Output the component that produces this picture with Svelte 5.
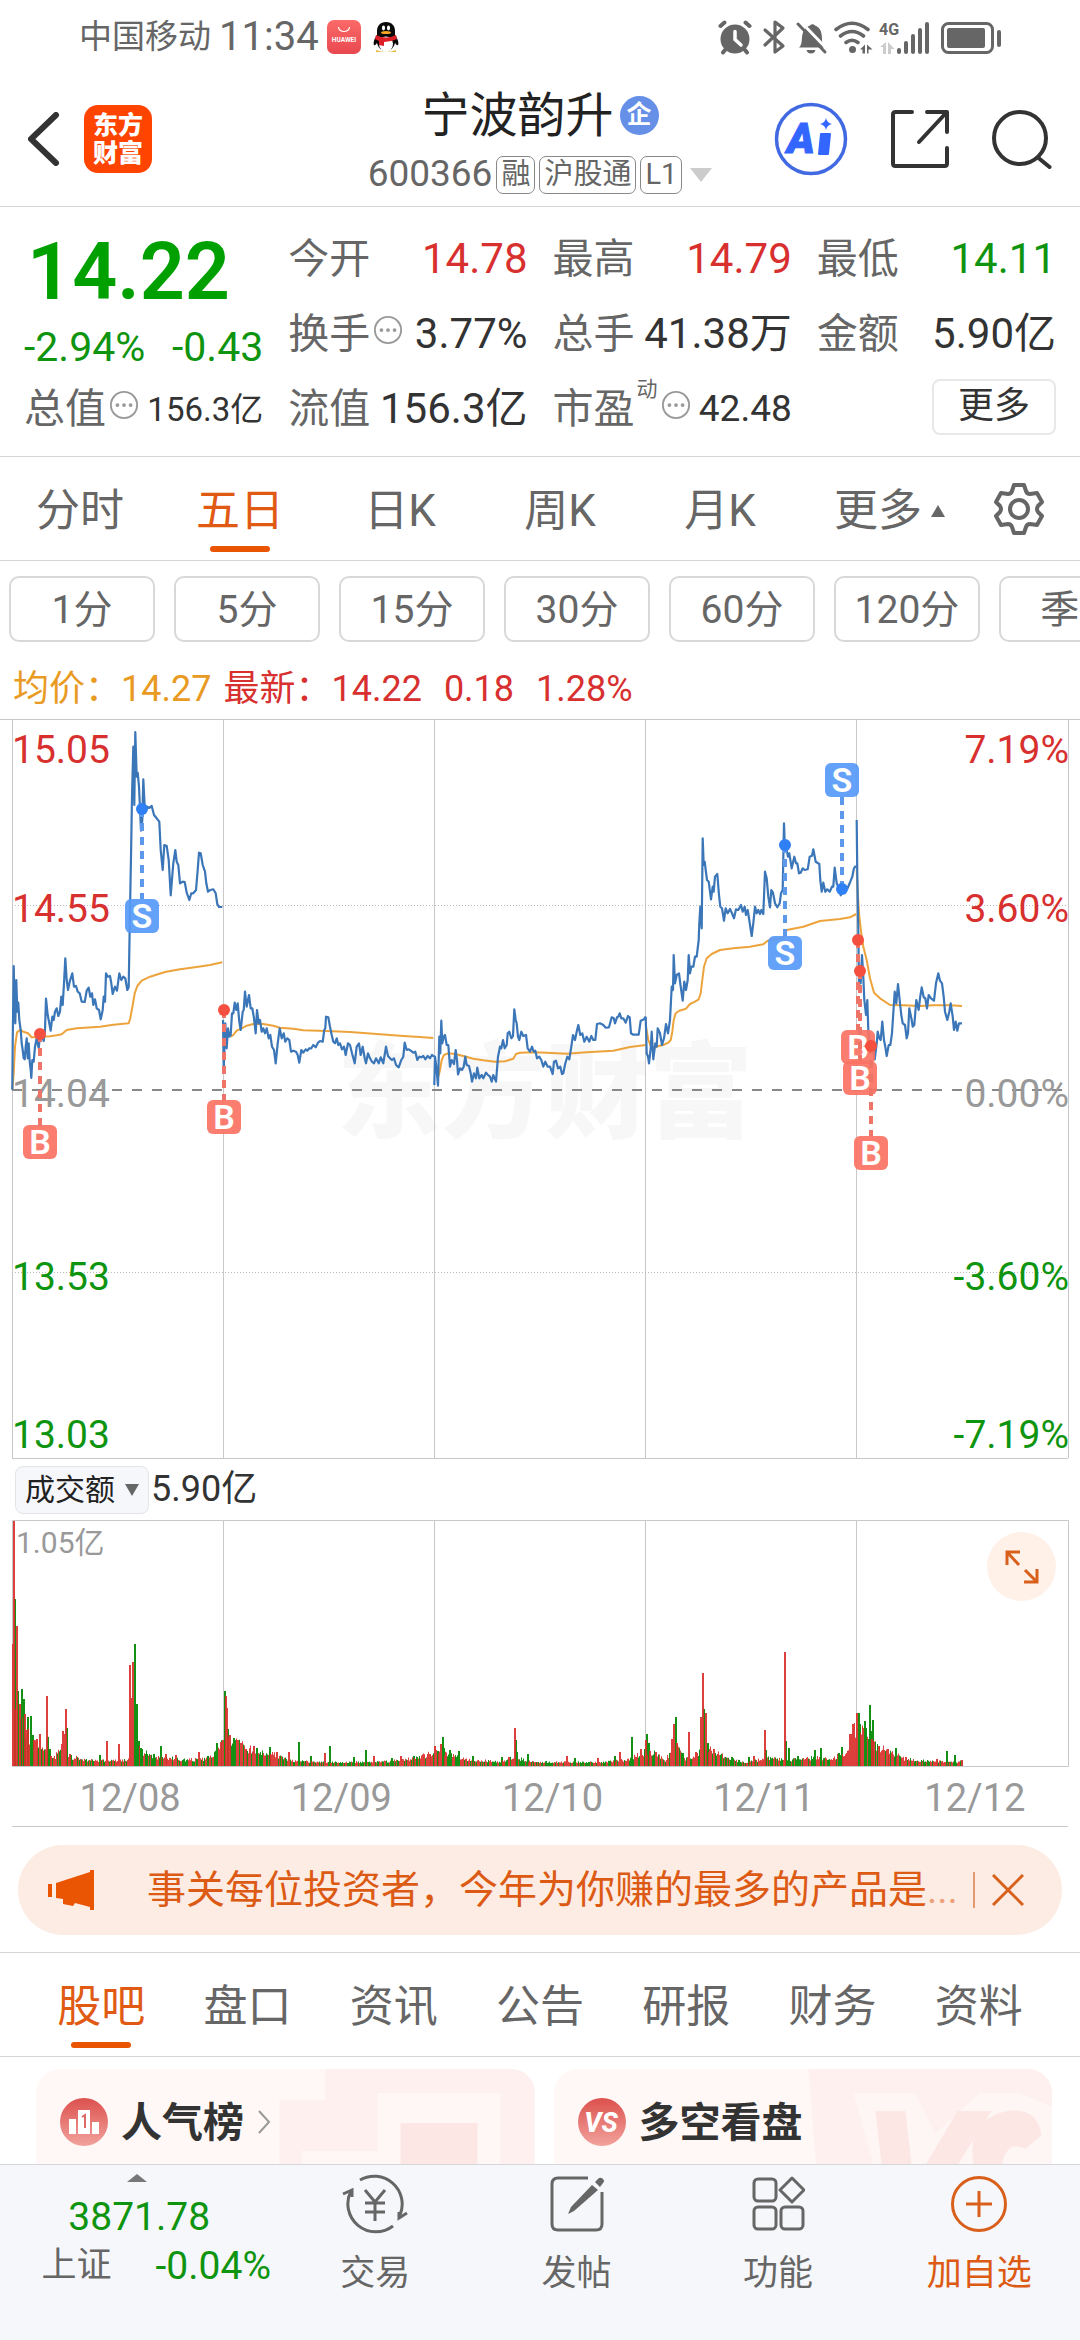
<script>
  const stats = [
    { label: '今开', value: '14.78', tone: 'up' },
    { label: '最高', value: '14.79', tone: 'up' },
    { label: '最低', value: '14.11', tone: 'down' },
    { label: '换手', value: '3.77%', info: true },
    { label: '总手', value: '41.38万' },
    { label: '金额', value: '5.90亿' },
    { label: '流值', value: '156.3亿' },
    { label: '市盈', value: '42.48', info: true, sup: '动', small: true }
  ];
  const ranges = ['分时', '五日', '日K', '周K', '月K'];
  const periods = ['1分', '5分', '15分', '30分', '60分', '120分', '季K'];
  const dates = ['12/08', '12/09', '12/10', '12/11', '12/12'];
  const sections = ['股吧', '盘口', '资讯', '公告', '研报', '财务', '资料'];

  let range = $state('五日');
  let section = $state('股吧');
  let bannerOpen = $state(true);

  // Sample lists hold "x,y" pairs at three units per chart pixel.
  function trace(samples, dx, dy) {
    return 'M' + samples.trim().split(/\s+/).map((pair) => {
      const [x, y] = pair.split(',').map(Number);
      return (x / 3 + dx).toFixed(1) + ' ' + (y / 3 + dy).toFixed(1);
    }).join('L');
  }

  const price = [
    trace('37,1139 38,1000 41,768 44,900 46,940 49,810 52,905 55,878 58,930 62,960 65,1000 68,1020 71,1045 74,1048 77,1010 80,985 83,1045 86,1000 89,1055 92,1080 94,1104 97,1050 101,1055 105,1010 110,985 116,1015 120,975 126,978 131,993 135,960 138,866 143,915 147,935 152,962 157,920 161,930 165,905 170,895 175,918 180,905 184,860 188,885 192,820 196,745 200,810 204,840 209,815 217,790 222,830 228,828 233,845 239,850 245,875 254,876 260,842 266,833 271,860 276,850 280,885 285,868 290,895 297,900 302,928 308,900 311,860 315,875 318,790 323,800 330,798 334,820 338,852 345,830 351,842 358,790 364,810 370,800 376,805 382,840 386,832 390,600 393,440 396,260 400,110 403,285 406,66 410,200 413,188 417,230 423,362 427,330 430,208 434,290 441,290 447,294 455,288 462,315 470,325 478,335 482,420 488,480 493,405 500,408 506,450 512,556 520,460 526,420 530,455 535,465 540,520 548,515 554,516 560,548 568,570 574,550 580,550 588,540 593,480 597,428 602,430 608,465 615,485 619,520 624,545 631,540 640,538 647,550 652,582 657,591 667,591', 0, -9),
    trace('669,930 671,1080 676,940 680,1015 684,955 688,980 692,975 696,910 700,910 704,878 709,900 713,880 718,935 722,960 728,905 731,900 735,845 740,890 747,855 752,895 757,895 762,925 767,970 771,900 776,940 780,930 785,965 790,955 795,970 800,955 806,985 811,975 816,1010 822,1020 827,1060 833,1000 839,955 845,985 851,970 856,995 862,985 868,990 873,1025 880,1022 888,1025 893,1035 898,1058 904,1020 910,1028 917,1018 922,1022 928,1015 934,1015 940,1005 947,1012 954,998 960,993 968,995 973,960 976,955 978,920 985,922 990,950 995,975 1000,995 1005,1000 1010,985 1015,1005 1020,1000 1026,1018 1032,1010 1037,1035 1044,1000 1050,1005 1056,1030 1064,1060 1070,1010 1077,1000 1082,1035 1088,1010 1094,1045 1098,1060 1104,1030 1110,1045 1116,1055 1122,1060 1128,1045 1136,1060 1142,1042 1150,1060 1158,1010 1164,1038 1170,1045 1176,1050 1182,1045 1188,1065 1196,1072 1204,1050 1210,1040 1214,998 1220,1020 1226,1018 1232,1022 1240,1028 1246,1025 1252,1050 1258,1040 1264,1042 1270,1038 1276,1048 1283,1038 1290,1045 1296,1035 1302,1040', 0, -9),
    trace('103,555 105,470 109,500 114,557 118,410 121,460 124,362 127,430 131,410 135,405 140,435 145,435 150,500 155,480 162,492 167,450 171,480 174,523 180,505 186,510 191,500 196,470 200,495 207,498 212,520 216,545 222,520 228,535 232,503 238,535 245,525 250,535 258,518 264,525 270,530 275,545 280,525 288,545 294,470 300,440 304,445 309,420 314,445 320,435 323,400 328,395 334,415 339,408 343,328 347,360 350,370 354,410 358,420 364,395 370,408 378,405 383,445 390,455 396,440 401,455 406,452 411,475 418,470 424,480 430,500 436,485 443,500 450,500 458,522 462,485 468,482 474,505 481,500 486,522 490,520 496,490 502,470 508,478 514,440 519,405 525,420 530,395 535,375 541,405 547,400 553,425 560,410 568,425 574,408 580,420 586,420 591,372 600,370 610,375 617,383 627,382 635,352 641,355 645,370 651,352 655,350 659,340 664,355 670,355 677,368 684,348 689,352 693,400 700,404 716,404 722,362 732,358 737,350', 400, 181),
    trace('17,920 20,1030 24,1040 27,1060 32,1015 35,965 40,1048 46,1000 50,1010 53,955 60,970 66,1005 72,985 78,942 84,970 90,930 95,830 99,840 101,735 105,820 110,795 117,790 122,830 128,872 133,815 138,840 143,810 146,735 150,790 154,770 160,770 165,740 170,740 176,690 178,640 181,590 185,655 188,385 191,465 194,455 197,480 201,510 206,515 213,568 218,530 221,545 225,500 232,492 237,555 241,590 246,595 252,632 257,595 263,610 270,597 277,612 282,625 288,598 295,600 303,585 308,605 314,590 318,615 323,600 327,625 335,678 340,640 345,590 350,610 355,600 360,612 364,600 370,612 375,485 380,505 385,560 390,592 394,540 399,548 405,580 412,592 419,580 423,550 428,540 432,340 434,400 440,420 444,440 448,430 455,475 463,440 468,460 472,460 477,490 482,488 488,475 494,480 503,478 509,440 516,437 520,418 527,455 538,462 541,510 545,545 550,518 556,545 562,538 569,545 576,530 580,530 584,473 590,520 597,535 602,556 610,540 622,536 631,515 637,500 641,478 645,470 649,470', 640, -9),
    trace('650,330 652,500 655,660 657,820 662,820 666,735 670,800 673,870 678,915 682,870 685,960 690,1020 695,1000 704,1048 710,1000 713,965 718,985 722,990 727,935 732,990 736,1010 740,1038 746,1005 751,1005 756,970 760,910 764,845 769,880 774,822 780,880 784,915 788,940 795,945 800,985 804,970 808,895 815,930 818,950 823,945 829,870 836,900 840,865 845,832 851,862 856,865 861,895 866,855 873,865 882,872 888,820 895,790 900,812 906,820 911,860 915,905 922,930 928,905 932,880 938,920 942,960 947,935 952,962 957,940 966,940', 640, -9)
  ];
  const average = [
    trace('37,1139 41,1090 45,1010 51,967 60,960 70,965 84,970 95,982 110,982 130,980 150,979 170,976 185,973 200,960 230,955 300,950 340,944 386,940 391,925 398,885 404,850 412,828 425,812 450,800 495,786 540,778 590,771 630,765 667,757', 0, -9),
    trace('692,980 700,975 710,962 725,955 740,947 760,942 790,942 820,947 840,953 880,956 910,961 980,963 1050,966 1130,972 1210,978 1260,981 1300,984', 0, -9),
    trace('115,530 120,510 125,480 132,465 145,460 165,462 190,468 220,476 250,481 285,485 315,484 340,476 348,462 360,458 400,457 440,458 500,461 560,457 640,452 690,441 737,435', 400, 181),
    trace('17,945 25,990 33,1010 42,1013 55,1008 70,1005 85,998 92,990 97,965 101,930 107,910 118,902 138,896 150,882 165,875 176,868 182,850 187,810 192,770 200,745 215,732 240,720 280,715 330,710 370,703 382,693 400,688 428,685 440,660 490,650 540,633 600,627 630,622 649,612', 640, -9),
    trace('650,480 654,560 658,620 664,670 670,710 680,750 690,805 702,848 720,865 750,885 790,886 840,888 880,886 930,886 966,888', 640, -9)
  ];

  const trades = [
    { side: 'B', x: 40, dot: 315, tag: 423 },
    { side: 'S', x: 142, dot: 90, tag: 197 },
    { side: 'B', x: 224, dot: 291, tag: 398 },
    { side: 'S', x: 785, dot: 126, tag: 234 },
    { side: 'S', x: 842, dot: 170, tag: 61 },
    { side: 'B', x: 858, dot: 221, tag: 328 },
    { side: 'B', x: 860, dot: 252, tag: 359 },
    { side: 'B', x: 871, dot: 327, tag: 434 }
  ];

  const gridX = [223.5, 434.5, 645.5, 856.5];
  const scale = [
    { y: 44, left: '15.05', right: '7.19%', tone: 'up' },
    { y: 203, left: '14.55', right: '3.60%', tone: 'up' },
    { y: 388, left: '14.04', right: '0.00%', tone: 'flat' },
    { y: 571, left: '13.53', right: '-3.60%', tone: 'down' },
    { y: 729, left: '13.03', right: '-7.19%', tone: 'down' }
  ];

  // Turnover: a base level for ordinary minutes plus the minutes that stand out.
  const level = [[12, 70], [20, 60], [30, 30], [40, 18], [55, 11], [62, 22], [70, 11], [85, 7], [110, 6], [128, 7], [134, 50], [140, 18], [155, 10], [170, 9], [185, 7], [205, 8], [215, 14], [223, 27], [228, 32], [240, 24], [255, 17], [275, 13], [290, 6], [330, 4], [380, 5], [410, 8], [435, 15], [445, 15], [470, 7], [500, 5], [515, 10], [530, 5], [600, 4], [630, 8], [641, 15], [650, 17], [665, 7], [676, 24], [685, 8], [698, 14], [705, 26], [715, 15], [730, 8], [745, 4], [765, 9], [800, 7], [815, 10], [830, 7], [845, 16], [856, 46], [872, 27], [890, 15], [905, 8], [940, 5], [963, 5]];
  const spikes = '12,122r 13,245r 14,167g 16,140r 17,75g 19,62r 21,77g 23,67g 24,52r 26,36r 27,49g 30,50g 32,31g 33,26r 36,27r 39,32r 41,17g 46,70r 47,29g 49,17g 62,35r 64,32r 65,57r 66,38g 69,12r 99,11g 106,25r 118,22r 129,101r 131,68r 132,104r 134,122g 135,40g 136,62g 138,25g 140,18g 153,12g 160,20g 165,12r 175,11r 198,14r 207,10g 216,23g 220,24r 222,26r 224,75g 225,70r 226,58r 227,37g 229,31r 233,28g 237,26r 241,23r 245,17r 253,20r 256,18g 269,19g 276,14r 288,14r 298,24g 310,10g 324,13r 329,20g 353,9g 365,16g 373,10r 391,8g 400,10r 413,10g 429,12r 434,20r 437,15g 440,22r 442,29g 443,18g 449,16g 458,15g 472,10g 501,9g 508,9r 514,38r 515,26g 516,14g 527,12g 566,10r 574,8g 597,8r 614,10g 619,14r 631,29g 640,17r 645,26r 646,32g 648,23g 649,15r 655,14r 671,27r 673,42r 675,49g 676,23r 682,13g 688,34r 695,14r 700,49r 702,93r 703,57g 705,53r 707,23g 709,17r 713,17r 717,12r 731,9g 748,9g 753,10r 764,36r 765,16g 784,114r 785,25g 788,18g 797,10g 814,16g 820,18g 838,13g 841,19g 849,32r 852,42r 856,53r 858,53g 859,42g 864,45g 865,38g 869,61g 870,35g 871,27r 872,46g 878,20r 887,17r 895,18g 905,9r 936,7r 946,15g 954,11g 961,6r';

  function levelAt(x) {
    for (let i = 1; i < level.length; i += 1) {
      const [x0, h0] = level[i - 1];
      const [x1, h1] = level[i];
      if (x <= x1) return h0 + ((h1 - h0) * (x - x0)) / (x1 - x0);
    }
    return 3;
  }

  const volume = (() => {
    const out = { r: '', g: '' };
    let seed = 11;
    const next = () => {
      seed = (seed * 16807) % 2147483647;
      return seed / 2147483647;
    };
    const marked = new Map(spikes.split(' ').map((item) => {
      const [, x, h, tone] = item.match(/(\d+),(\d+)(\w)/);
      return [Number(x), { h: Number(h), tone }];
    }));
    for (let x = 12; x < 963; x += 1) {
      const base = Math.max(3, levelAt(x) * (0.6 + 0.5 * next()));
      const rising = (x > 841 && x < 857) || next() > 0.45;
      const spike = marked.get(x);
      const h = spike ? spike.h : base;
      const tone = spike ? spike.tone : rising ? 'r' : 'g';
      out[tone] += `M${x} ${(246 - h).toFixed(1)}h${spike ? 2 : 1}V246h${spike ? -2 : -1}z`;
    }
    return out;
  })();
</script>

{#snippet info()}
  <svg class="info" viewBox="0 0 32 32" aria-hidden="true">
    <circle cx="16" cy="16" r="14" fill="none" stroke="#999" stroke-width="2" />
    <circle cx="9" cy="16" r="2" fill="#999" /><circle cx="16" cy="16" r="2" fill="#999" /><circle cx="23" cy="16" r="2" fill="#999" />
  </svg>
{/snippet}

<div class="app">
  <div class="status">
    <span class="carrier">中国移动</span>
    <span class="clock">11:34</span>
    <svg class="huawei" viewBox="0 0 34 34" aria-hidden="true">
      <defs><linearGradient id="hw" x1="0" y1="0" x2="0" y2="1"><stop offset="0" stop-color="#fb6a68" /><stop offset="1" stop-color="#e8484f" /></linearGradient></defs>
      <rect width="34" height="34" rx="7" fill="url(#hw)" />
      <path d="M11.500 7a5.500 4.500 0 0 0 11 0" fill="none" stroke="#fff" stroke-width="1.200" />
      <text x="17" y="22" font-size="6.500" font-weight="700" text-anchor="middle" fill="#fff">HUAWEI</text>
    </svg>
    <svg class="qq" viewBox="0 0 26 32" aria-hidden="true">
      <path d="M3 29q10 4 20 0v2H3z" fill="#e8b93c" />
      <path d="M13 1c-6 0-9 4-9 9v4c-3 4-4 8-3 10 1 1 2-1 3-2 1 5 5 8 9 8s8-3 9-8c1 1 2 3 3 2 1-2 0-6-3-10v-4c0-5-3-9-9-9z" fill="#0a0a0a" />
      <ellipse cx="13" cy="23" rx="7" ry="7.500" fill="#fff" />
      <ellipse cx="10.500" cy="7" rx="1.600" ry="2.400" fill="#fff" /><ellipse cx="15.500" cy="7" rx="1.600" ry="2.400" fill="#fff" />
      <ellipse cx="13" cy="11.500" rx="5" ry="1.600" fill="#f5a623" />
      <path d="M3 14q10 5 20 0l1 4q-6 3-13 3v4l-5-1v-4l-4-2z" fill="#dc1f26" />
    </svg>
    <span class="spacer"></span>
    <svg class="sysicons" viewBox="0 0 284 36" role="img" aria-label="闹钟 蓝牙 静音 无线网络 4G 电池">
      <g fill="#666">
        <circle cx="17" cy="20" r="14.500" />
        <g stroke="#666" stroke-width="4" stroke-linecap="round"><path d="M2.500 7l4-3.500M31.500 7l-4-3.500M7 31l-2 2.500M27 31l2 2.500" /></g>
        <path d="M17 12.500v8l6 5.500" fill="none" stroke="#fff" stroke-width="3.500" stroke-linecap="round" />
        <path d="M47 11l18 16-8 6V3l8 6-18 17" fill="none" stroke="#666" stroke-width="3.200" stroke-linejoin="round" stroke-linecap="round" />
        <path d="M81 28.500c4-3 2-10 4-15 1-4 4-6 7-7a3 3 0 0 1 5 0c6 2 7 8 7 14 0 4 1 6 3 8zM88.500 31h9q-1 3.500-4.500 3.500T88.500 31z" />
        <path d="M83 3l27 28" stroke="#fff" stroke-width="3" /><path d="M80 5l27 28" stroke="#666" stroke-width="3" stroke-linecap="round" />
        <g fill="none" stroke="#666" stroke-width="3.600" stroke-linecap="round"><path d="M118 10.500q16-12.500 32 0M122.500 17q11.500-9 23 0M128 23.500q6-4.500 12 0" /></g>
        <circle cx="134.500" cy="30.500" r="3.500" />
        <path d="M147 25.500v9h-2.500v-4H142zM149 25.500v9h1.500v-4h4z" />
        <g fill="#ccc"><path d="M168 23v12h-3v-7h-3zM170 23v12h3v-5h3.500z" /></g>
        <text x="161" y="16" font-size="16" font-weight="700">4G</text>
        <rect x="179" y="29" width="4" height="6" rx="2" /><rect x="186" y="22" width="4" height="13" rx="2" /><rect x="193" y="15" width="4" height="20" rx="2" /><rect x="200" y="9" width="4" height="26" rx="2" /><rect x="207" y="3" width="4" height="32" rx="2" />
        <rect x="224.500" y="4.500" width="50" height="29" rx="6" fill="none" stroke="#666" stroke-width="3" />
        <rect x="229" y="9" width="38" height="20" rx="2" /><rect x="279" y="11" width="4" height="17" rx="2" />
      </g>
    </svg>
  </div>

  <header class="top">
    <div class="left">
      <button class="icon" aria-label="返回">
        <svg width="32" height="54" viewBox="0 0 32 54"><path d="M28 3L3 27l25 24" fill="none" stroke="#333" stroke-width="6" stroke-linecap="round" /></svg>
      </button>
      <a class="logo" href="#home">东方<br />财富</a>
    </div>
    <div class="names">
      <h1>宁波韵升<span class="corp">企</span></h1>
      <div class="tags">
        <span class="code">600366</span><span class="tag">融</span><span class="tag">沪股通</span><span class="tag">L1</span>
        <svg class="caret" width="22" height="14" viewBox="0 0 22 14" aria-hidden="true"><path d="M0 0h22L11 14z" fill="#ccc" /></svg>
      </div>
    </div>
    <div class="actions">
      <button class="icon" aria-label="AI 助手">
        <svg width="74" height="74" viewBox="0 0 74 74">
          <circle cx="37" cy="37" r="34.500" fill="none" stroke="#4169e1" stroke-width="3.500" />
          <text x="13" y="51" font-size="42" font-weight="900" font-style="italic" fill="#3366ff" stroke="#3366ff" stroke-width="1">A</text>
          <path d="M47 32h9l-2 20h-9z" fill="#3366ff" stroke="#3366ff" stroke-linejoin="round" stroke-width="2" /><path d="M52 16q1 5 6 6-5 1-6 6-1-5-6-6 5-1 6-6z" fill="#3366ff" />
        </svg>
      </button>
      <button class="icon" aria-label="分享">
        <svg width="60" height="60" viewBox="0 0 60 60"><g fill="none" stroke="#333" stroke-width="4" stroke-linecap="round" stroke-linejoin="round"><path d="M22 3H5.500Q3 3 3 5.500v49Q3 57 5.500 57h49q2.500 0 2.500-2.500V39M37 3h20v20M56 4L29 33" /></g></svg>
      </button>
      <button class="icon" aria-label="搜索">
        <svg width="60" height="60" viewBox="0 0 60 60"><g fill="none" stroke="#333" stroke-width="4" stroke-linecap="round"><circle cx="28" cy="29" r="26" /><path d="M46.500 49l11 9" /></g></svg>
      </button>
    </div>
  </header>

  <main>
    <section class="quote">
      <div class="lead">
        <strong>14.22</strong>
        <div class="change"><span>-2.94%</span><span>-0.43</span></div>
        <div class="cell"><span class="label">总值</span>{@render info()}<span class="value tiny">156.3亿</span></div>
      </div>
      {#each stats as s}
        <div class="cell">
          <span class="label">{s.label}{#if s.sup}<sup>{s.sup}</sup>{/if}</span>{#if s.info}{@render info()}{/if}
          <span class={['value', s.tone, s.small && 'small']}>{s.value}</span>
        </div>
      {/each}
      <div class="cell end"><button class="more">更多</button></div>
    </section>

    <nav class="ranges">
      {#each ranges as r}
        <button class={{ active: range === r }} onclick={() => (range = r)}>{r}</button>
      {/each}
      <button class="wide">更多<svg width="16" height="12" viewBox="0 0 16 12" aria-hidden="true"><path d="M8 0l7 12H1z" fill="#666" /></svg></button>
      <button class="gear" aria-label="设置">
        <svg width="54" height="54" viewBox="0 0 54 54"><g fill="none" stroke="#666" stroke-width="4" stroke-linejoin="round"><path d="M22 3h10l2 6q1 3 4 3l7-1 5 9-4 4q-2 3 0 6l4 4-5 9-7-1q-3 0-4 3l-2 6H22l-2-6q-1-3-4-3l-7 1-5-9 4-4q2-3 0-6l-4-4 5-9 7 1q3 0 4-3z" /><circle cx="27" cy="27" r="9" /></g></svg>
      </button>
    </nav>

    <div class="periods">
      {#each periods as p}<button>{p}</button>{/each}
    </div>

    <p class="legend"><span class="avg">均价：<b>14.27</b></span><span class="up">最新：<b>14.22</b><b>0.18</b><b>1.28%</b></span></p>

    <svg class="chart" viewBox="0 0 1080 740" role="img" aria-label="五日分时走势">
      <text class="mark" x="545" y="411" text-anchor="middle">东方财富</text>
      <g stroke="#c8c8c8" stroke-width="1">
        <path d="M0 .5h1080M12 739.500h1056M12.500 0v739M1068.500 0v739" />
        {#each gridX as x}<path d={`M${x} 0v739`} />{/each}
        <path d="M12 186.500h1056M12 553.500h1056" stroke-dasharray="1 2" stroke="#bbb" />
      </g>
      <path d="M12 371h1056" stroke="#888" stroke-width="2" stroke-dasharray="10 10" />
      <g font-size="39">
        {#each scale as s}
          <text class={s.tone} x="12" y={s.y}>{s.left}</text>
          <text class={s.tone} x="1069" y={s.y} text-anchor="end">{s.right}</text>
        {/each}
      </g>
      <g fill="none" stroke-linejoin="round">
        {#each average as d}<path {d} stroke="#eda33b" stroke-width="2" />{/each}
        {#each price as d}<path {d} stroke="#3b76b8" stroke-width="2.200" />{/each}
      </g>
      {#each trades as t}
        <g class={t.side === 'B' ? 'buy' : 'sell'}>
          <path class="stem" d={`M${t.x} ${t.dot}V${t.tag < t.dot ? t.tag + 17 : t.tag - 17}`} />
          <circle cx={t.x} cy={t.dot} r="6" />
          <rect x={t.x - 17} y={t.tag - 17} width="34" height="34" rx="6" />
          <text x={t.x} y={t.tag + 12} text-anchor="middle">{t.side}</text>
        </g>
      {/each}
    </svg>

    <div class="turnover">
      <span class="pick">
        <select aria-label="副图指标"><option>成交额</option><option>成交量</option></select>
        <svg width="14" height="12" viewBox="0 0 14 12" aria-hidden="true"><path d="M0 0h14L7 12z" fill="#666" /></svg>
      </span>
      <span>5.90亿</span>
    </div>

    <div class="volume">
      <svg class="chart" viewBox="0 0 1080 247" role="img" aria-label="成交额">
        <g stroke="#c8c8c8" stroke-width="1" fill="none">
          <path d="M12.500 .5h1056v246h-1056z" />
          {#each gridX as x}<path d={`M${x} 0v246`} />{/each}
        </g>
        <text x="16" y="33" font-size="30" fill="#999">1.05亿</text>
        <path d={volume.g} fill="#149014" />
        <path d={volume.r} fill="#d92b27" fill-opacity="0.9" />
      </svg>
      <button class="expand" aria-label="全屏">
        <svg width="34" height="34" viewBox="0 0 34 34"><path d="M2 15V2h13M2 2l12 13M32 19v13H19M32 32L20 20" fill="none" stroke="#d9601c" stroke-width="3" /></svg>
      </button>
    </div>

    <div class="dates">{#each dates as d}<span>{d}</span>{/each}</div>

    {#if bannerOpen}
      <div class="promo">
        <div class="banner">
          <svg width="46" height="40" viewBox="0 0 46 40" aria-hidden="true"><path d="M0 14h4v13H0zM8 13L42 2V0h4v40h-4v-3l-15-4-2 3-10-2v-5l-7-1z" fill="#ea5504" /></svg>
          <a href="#news">事关每位投资者，今年为你赚的最多的产品是<i>...</i></a>
          <button class="icon" aria-label="关闭" onclick={() => (bannerOpen = false)}>
            <svg width="32" height="32" viewBox="0 0 32 32"><path d="M1 1l30 30M31 1L1 31" fill="none" stroke="#d9601c" stroke-width="3" /></svg>
          </button>
        </div>
      </div>
    {/if}

    <nav class="sections">
      {#each sections as s}
        <button class={{ active: section === s }} onclick={() => (section = s)}>{s}</button>
      {/each}
    </nav>

    <div class="cards">
      <a class="card" href="#rank">
        <svg class="art" viewBox="0 0 499 96" preserveAspectRatio="xMaxYMin slice" aria-hidden="true">
          <path d="M290 0h209v150H244V31h46z" fill="#fdf0ee" /><path d="M290 82h52V24h123v126H266V82z" fill="#fef7f5" /><path d="M365 54h77v96h-77z" fill="#fce7e5" />
        </svg>
        <svg class="badge" viewBox="0 0 48 48" aria-hidden="true">
          <defs><linearGradient id="bd" x1="0" y1="0" x2="0" y2="1"><stop offset="0" stop-color="#dc514e" /><stop offset="1" stop-color="#f2a29c" /></linearGradient></defs>
          <circle cx="24" cy="24" r="24" fill="url(#bd)" />
          <path d="M9 21h7v15H9zM18 12h12v24H18zM32 24h7v12h-7z" fill="#fff" /><path d="M22 19l3-2v13" fill="none" stroke="#dc6a66" stroke-width="2" />
        </svg>
        <span>人气榜</span>
        <svg width="14" height="24" viewBox="0 0 14 24" aria-hidden="true"><path d="M2 1l10 11L2 23" fill="none" stroke="#999" stroke-width="2" /></svg>
      </a>
      <a class="card" href="#bull-bear">
        <svg class="art" viewBox="0 0 499 96" preserveAspectRatio="xMaxYMin slice" aria-hidden="true">
          <path d="M255 0h244v150H267z" fill="#fdf0ee" />
          <path d="M300 24h62l20 40 44-40h40l33 14v58H320z" fill="#fef6f4" />
          <path d="M322 42h30l6 54h-30zM404 42h34l-34 54h-32z" fill="#fce7e5" />
          <path d="M420 96q-8-46 34-54 30-4 34 24l-16 14q-18-10-24 16z" fill="#fce7e5" />
        </svg>
        <svg class="badge" viewBox="0 0 48 48" aria-hidden="true">
          <circle cx="24" cy="24" r="24" fill="url(#bd)" />
          <text x="23" y="34" font-size="27" font-weight="800" font-style="italic" text-anchor="middle" fill="#fff">VS</text>
        </svg>
        <span>多空看盘</span>
      </a>
    </div>
  </main>

  <footer>
    <button class="index">
      <svg width="20" height="8" viewBox="0 0 20 8" aria-hidden="true"><path d="M10 0l10 8H0z" fill="#777" /></svg>
      <span class="points">3871.78</span>
      <span class="pair"><span>上证</span><span class="down">-0.04%</span></span>
    </button>
    <button>
      <svg width="66" height="60" viewBox="0 0 66 60"><g fill="none" stroke="#666" stroke-width="3"><path d="M18 6a28 28 0 0 1 40 35M51 52A28 28 0 0 1 9 17" /><path d="M1 20l9-4v7M65 39l-8 5v-6" /><path d="M23 16l10 12 10-12M33 28v19M23 29h20M23 38h20" /></g></svg>
      <span>交易</span>
    </button>
    <button>
      <svg width="56" height="60" viewBox="0 0 56 60"><path d="M39 4H9Q3 4 3 10v40q0 6 6 6h38q6 0 6-6V18" fill="none" stroke="#666" stroke-width="3" /><path d="M43 11l6 5-24 21-6 3 3-7zM46 8l4-4q2-1 4 1t0 4l-3 4z" fill="#666" /></svg>
      <span>发帖</span>
    </button>
    <button>
      <svg width="54" height="60" viewBox="0 0 54 60"><g fill="none" stroke="#666" stroke-width="3"><rect x="3" y="5" width="22" height="22" rx="4" /><rect x="3" y="33" width="22" height="22" rx="4" /><rect x="30" y="33" width="22" height="22" rx="4" /><path d="M41 4l12 12-12 12-12-12z" stroke-linejoin="round" /></g></svg>
      <span>功能</span>
    </button>
    <button class="add">
      <svg width="60" height="60" viewBox="0 0 60 60"><g fill="none" stroke="#d9601c" stroke-width="3"><circle cx="30" cy="30" r="26.500" /><path d="M30 17v26M17 30h26" /></g></svg>
      <span>加自选</span>
    </button>
  </footer>
</div>

<style>
  :global(body) { margin: 0; background: #fff; }
  .app {
    height: 100vh; display: flex; flex-direction: column; overflow: hidden;
    font-family: Roboto, 'Noto Sans CJK SC', sans-serif; color: #333; font-size: 42px; line-height: 1.2;
  }
  button { font: inherit; color: inherit; background: none; border: 0; padding: 0; margin: 0; cursor: pointer; }
  a { color: inherit; text-decoration: none; }
  svg { display: block; flex: none; }
  .icon { display: flex; }
  .up { color: #d7302f; fill: #d7302f; }
  .down { color: #0f940f; fill: #0f940f; }
  .flat { fill: #999; }

  .status { display: flex; align-items: center; box-sizing: border-box; height: 72px; padding: 2px 78px 0 79px; color: #666; }
  .carrier { font-size: 33px; }
  .clock { font-size: 40px; margin-left: 8px; }
  .huawei { width: 34px; height: 34px; margin-left: 8px; }
  .qq { width: 26px; height: 32px; margin-left: 12px; }
  .spacer { flex: 1; }
  .sysicons { width: 284px; height: 36px; }

  .top { display: grid; grid-template-columns: 1fr auto 1fr; align-items: center; height: 134px; padding: 0 28px; border-bottom: 1px solid #d4d4d4; }
  .left, .actions { display: flex; align-items: center; }
  .left { gap: 24px; }
  .actions { justify-content: flex-end; gap: 42px; }
  .logo { width: 68px; height: 68px; box-sizing: border-box; padding-top: 7px; border-radius: 14px; background: #ff4400; color: #fff; font-size: 25px; font-weight: 900; line-height: 28px; text-align: center; }
  .names { display: flex; flex-direction: column; align-items: center; padding-top: 7px; }
  h1 { display: flex; align-items: center; gap: 6px; margin: 0; font-size: 48px; font-weight: 400; line-height: 64px; color: #222; }
  .corp { width: 39px; height: 39px; border-radius: 50%; background: #6690e8; color: #fff; font-size: 25px; line-height: 37px; font-weight: 700; text-align: center; }
  .tags { display: flex; align-items: center; gap: 4px; height: 54px; color: #666; font-size: 37px; }
  .tag { box-sizing: border-box; height: 38px; padding: 0 4px; border: 1px solid #888; border-radius: 7px; font-size: 29px; line-height: 35px; }
  .caret { margin-left: 4px; }

  main { flex: 1; min-height: 0; overflow: hidden; }
  .quote { display: grid; grid-template-columns: repeat(4, 1fr); grid-auto-rows: 75px; column-gap: 25px; padding: 15px 24px 9px; border-bottom: 1px solid #d4d4d4; }
  .lead { grid-row: span 3; display: flex; flex-direction: column; color: #0f940f; }
  .lead strong { height: 100px; line-height: 100px; font-size: 79px; font-weight: 600; color: #00a000; padding-left: 3px; }
  .change { display: flex; justify-content: space-between; height: 50px; line-height: 50px; font-size: 41px; }
  .cell { display: flex; align-items: center; height: 75px; color: #333; white-space: nowrap; }
  .label { color: #666; font-size: 41px; }
  .label sup { font-size: 21px; line-height: 0; vertical-align: 27px; margin-left: 2px; }
  .info { width: 30px; height: 30px; margin-left: 3px; margin-bottom: 9px; }
  .value { margin-left: auto; }
  .value.up { color: #d7302f; }
  .value.down { color: #0f940f; }
  .value.small { font-size: 37px; }
  .value.tiny { font-size: 33px; }
  .end { justify-content: flex-end; }
  .more { width: 124px; height: 56px; margin-bottom: 6px; border: 2px solid #e6e8ea; border-radius: 8px; font-size: 36px; color: #333; }

  .ranges { display: flex; height: 103px; border-bottom: 1px solid #d4d4d4; color: #666; font-size: 44px; }
  .ranges button, .sections button { position: relative; flex: 1; padding-top: 5px; }
  .ranges button { flex: 160 0 0; }
  .ranges .wide { flex-grow: 146; display: flex; align-items: center; justify-content: flex-end; gap: 8px; }
  .ranges .gear { flex: none; width: 134px; padding: 0 0 0 12px; display: flex; align-items: center; justify-content: center; }
  .active { color: #e05a14; }
  .active::after { content: ''; position: absolute; left: calc(50% - 30px); bottom: 8px; width: 60px; height: 6px; border-radius: 3px; background: #ea5504; }

  .periods { display: flex; gap: 19px; padding: 15px 0 0 9px; overflow: hidden; }
  .periods button { flex: none; box-sizing: border-box; width: 146px; height: 66px; padding-top: 2px; border: 2px solid #d8d8d8; border-radius: 10px; color: #666; font-size: 39px; }
  .legend { display: flex; align-items: center; height: 58px; margin: 15px 0 0; padding: 4px 13px 0; font-size: 36px; }
  .legend span { display: flex; margin-right: 12px; }
  .legend b { font-weight: 400; margin-right: 22px; }
  .legend .avg { color: #e99a22; }
  .legend .avg b { margin-right: 0; }

  .chart { width: 100%; height: auto; }
  .mark { font-size: 104px; font-weight: 900; fill: #f7f7f7; }
  .stem { fill: none; stroke-width: 4; stroke-dasharray: 8 6; }
  .buy .stem { stroke: #ee7468; }
  .sell .stem { stroke: #5e98ea; }
  .buy circle { fill: #f5503f; }
  .sell circle { fill: #2f7ff5; }
  .buy rect { fill: #fa7263; fill-opacity: 0.92; }
  .sell rect { fill: #579af9; fill-opacity: 0.92; }
  .buy text, .sell text { fill: #fff; font-size: 34px; font-weight: 600; }

  .turnover { display: flex; align-items: center; gap: 2px; height: 61px; padding: 1px 0 0 15px; box-sizing: border-box; font-size: 36px; }
  .pick { display: flex; align-items: center; box-sizing: border-box; height: 48px; padding: 0 9px; background: #f6f7fa; border: 1px solid #e2e4e8; border-radius: 8px; }
  select { appearance: none; border: 0; background: none; padding: 0; width: 100px; font: inherit; font-size: 30px; color: #222; }
  .volume { position: relative; }
  .expand { position: absolute; right: 24px; top: 12px; width: 69px; height: 69px; border-radius: 50%; background: #fff0e8; display: flex; align-items: center; justify-content: center; }
  .dates { display: grid; grid-template-columns: repeat(5, 1fr); margin: 0 12px; height: 59px; line-height: 63px; border-bottom: 1px solid #c8c8c8; color: #999; font-size: 38px; text-align: center; }
  .dates span { padding-left: 25px; }

  .promo { padding: 18px; height: 90px; border-bottom: 1px solid #d4d4d4; padding-bottom: 17px; }
  .banner { display: flex; align-items: center; height: 90px; padding: 0 38px 0 30px; border-radius: 45px; background: #fdece3; color: #dc5a14; font-size: 39px; }
  .banner a { flex: 1; margin-left: 53px; white-space: nowrap; overflow: hidden; }
  .banner i { font-style: normal; color: #eda27c; }
  .banner .icon { border-left: 2px solid #e39a70; padding: 2px 0 2px 17px; }

  .sections { display: flex; height: 103px; padding: 0 28px; border-bottom: 1px solid #d4d4d4; color: #666; font-size: 44px; }
  .cards { display: grid; grid-template-columns: 1fr 1fr; gap: 19px; padding: 12px 28px 0 36px; }
  .card { position: relative; display: flex; align-items: center; gap: 13px; height: 96px; box-sizing: border-box; padding: 10px 24px 0; border-radius: 24px 24px 0 0; overflow: hidden; background: #fff8f6; font-size: 41px; font-weight: 700; }
  .card > * { position: relative; }
  .card .art { position: absolute; inset: 0; width: 100%; height: 100%; }
  .card span { padding-top: 3px; }
  .badge { width: 48px; height: 48px; }

  footer { display: flex; height: 175px; border-top: 1px solid #d4d6da; background: #f6f7fa; color: #666; font-size: 35px; }
  footer button { flex: 201; display: flex; flex-direction: column; align-items: center; padding-top: 9px; }
  footer button > span { line-height: 42px; margin-top: 19px; }
  footer .index { flex: 274; }
  footer .points { color: #0f940f; font-size: 39px; margin-top: 14px; padding-left: 4px; }
  footer .pair { display: flex; gap: 44px; margin-top: 7px; padding-left: 38px; }
  footer .pair .down { font-size: 39px; }
  footer .add { color: #dc5a14; }
</style>
